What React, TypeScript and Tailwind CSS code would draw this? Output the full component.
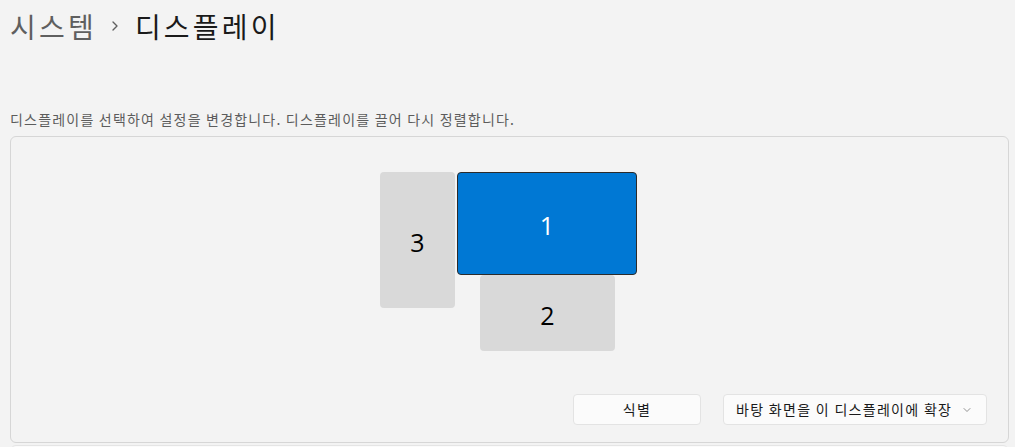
import { ChevronDown, ChevronRight } from "lucide-react";

const KR = "font-['Noto_Sans_CJK_KR','Noto_Sans',sans-serif]";

function Monitor({ n, active, className }: { n: number; active?: boolean; className: string }) {
  return (
    <div
      className={`absolute flex items-center justify-center pt-[5px] rounded-[4px] font-['Open_Sans',sans-serif] text-[25px] ${
        active ? "bg-[#0078d4] text-white border border-[#2b2b2b]" : "bg-[#d9d9d9] text-black"
      } ${className}`}
    >
      {n}
    </div>
  );
}

export default function App() {
  return (
    <div className={`min-h-screen w-[1015px] h-[447px] overflow-hidden bg-[#f3f3f3] ${KR}`}>
      <div className="pl-[10px]">
        <h1 className="flex items-center h-[52px] text-[28px] leading-none tracking-[3.2px]">
          <span className="text-[#5f5f5f]">시스템</span>
          <ChevronRight size={16} strokeWidth={2} className="ml-[10px] mr-[12px] text-[#5f5f5f]" />
          <span className="text-[#1a1a1a]">디스플레이</span>
        </h1>
        <p className="mt-[57px] text-[14px] leading-[20px] tracking-[1.2px] text-[#5c5c5c]">
          디스플레이를 선택하여 설정을 변경합니다. 디스플레이를 끌어 다시 정렬합니다.
        </p>
      </div>

      <div className="ml-[10px] mt-[7px] w-[999px] h-[307px] rounded-[6px] border border-[#d6d6d6] bg-[#f3f3f3] flex flex-col">
        <div className="relative ml-[369px] mt-[35px] w-[257px] h-[179px]">
          <Monitor n={3} className="left-0 top-0 w-[75px] h-[136px]" />
          <Monitor n={1} active className="left-[77px] top-0 w-[180px] h-[103px]" />
          <Monitor n={2} className="left-[100px] top-[103px] w-[135px] h-[76px]" />
        </div>
        <div className="mt-[43px] flex justify-end gap-[22px] pr-[21px]">
          <button className="w-[128px] h-[31px] rounded-[4px] border border-[#e3e3e3] bg-[#fbfbfb] text-[14px] tracking-[1.3px] text-[#1a1a1a]">
            식별
          </button>
          <button className="w-[264px] h-[31px] rounded-[4px] border border-[#e3e3e3] bg-[#fbfbfb] flex items-center justify-between pl-[12px] pr-[13px] text-[14px] tracking-[1.3px] text-[#1a1a1a]">
            <span>바탕 화면을 이 디스플레이에 확장</span>
            <ChevronDown size={12} strokeWidth={1.5} className="text-[#6f6f6f]" />
          </button>
        </div>
      </div>
      <div className="ml-[10px] mt-[2px] w-[999px] h-[20px] rounded-t-[6px] border border-[#e5e5e5] bg-[#fbfbfb]" />
    </div>
  );
}
